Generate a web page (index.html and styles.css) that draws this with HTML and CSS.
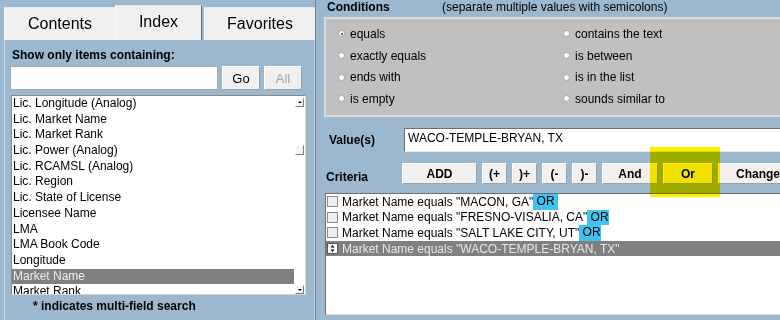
FILE: index.html
```html
<!DOCTYPE html>
<html lang="en">
<head>
  <meta charset="UTF-8">
  <title>Query Builder</title>
  <link rel="stylesheet" href="styles.css">
</head>
<body>
  <div class="window">
    <div class="index-pane">
      <div class="tabs">
        <div class="tab">Contents</div>
        <div class="tab active">Index</div>
        <div class="tab last">Favorites</div>
      </div>

      <div class="index-body">
        <div class="filter-label">Show only items containing:</div>
        <div class="filter-row">
          <input class="filter-input" type="text">
          <button class="btn small">Go</button>
          <button class="btn small disabled">All</button>
        </div>

        <div class="field-list">
          <ul class="items">
            <li>Lic. Longitude (Analog)</li>
            <li>Lic. Market Name</li>
            <li>Lic. Market Rank</li>
            <li>Lic. Power (Analog)</li>
            <li>Lic. RCAMSL (Analog)</li>
            <li>Lic. Region</li>
            <li>Lic. State of License</li>
            <li>Licensee Name</li>
            <li>LMA</li>
            <li>LMA Book Code</li>
            <li>Longitude</li>
            <li class="selected">Market Name</li>
            <li>Market Rank</li>
          </ul>
          <div class="scrollbar">
            <div class="sb-arrow up"></div>
            <div class="sb-track"><div class="sb-thumb"></div></div>
            <div class="sb-arrow down"></div>
          </div>
        </div>

        <div class="footnote">* indicates multi-field search</div>
      </div>
    </div>

    <div class="query-pane">
      <div class="cond-head">
        <span class="cond-title">Conditions</span>
        <span>(separate multiple values with semicolons)</span>
      </div>

      <div class="conditions">
        <label class="option"><span class="radio checked"></span>equals</label>
        <label class="option"><span class="radio"></span>contains the text</label>
        <label class="option"><span class="radio"></span>exactly equals</label>
        <label class="option"><span class="radio"></span>is between</label>
        <label class="option"><span class="radio"></span>ends with</label>
        <label class="option"><span class="radio"></span>is in the list</label>
        <label class="option"><span class="radio"></span>is empty</label>
        <label class="option"><span class="radio"></span>sounds similar to</label>
      </div>

      <div class="value-row">
        <div class="row-label">Value(s)</div>
        <input class="value-input" type="text" value="WACO-TEMPLE-BRYAN, TX">
      </div>

      <div class="criteria-row">
        <div class="row-label crit">Criteria</div>
        <button class="btn op w-add">ADD</button>
        <button class="btn op w-par">(+</button>
        <button class="btn op w-par">)+</button>
        <button class="btn op w-par">(-</button>
        <button class="btn op w-par">)-</button>
        <button class="btn op w-and">And</button>
        <button class="btn op w-or">Or</button>
        <button class="btn op w-chg">Change</button>
        <div class="marker"></div>
      </div>

      <div class="criteria-list">
        <div class="crit-item"><span class="check"></span>Market Name equals "MACON, GA"<span class="or">&nbsp;OR&nbsp;</span></div>
        <div class="crit-item"><span class="check"></span>Market Name equals "FRESNO-VISALIA, CA"<span class="or">&nbsp;OR</span></div>
        <div class="crit-item"><span class="check"></span>Market Name equals "SALT LAKE CITY, UT"<span class="or">&nbsp;OR</span></div>
        <div class="crit-item current">
          <span class="expander">
            <svg width="9" height="9" viewBox="0 0 9 9"><path d="M4.5 1 L6.5 3.5 H2.5 Z M4.5 8 L6.5 5.5 H2.5 Z" fill="#000"/></svg>
          </span>Market Name equals "WACO-TEMPLE-BRYAN, TX"
        </div>
      </div>
    </div>
  </div>
</body>
</html>
```

FILE: styles.css
```css
/* Base */
* {
  margin: 0;
  padding: 0;
  box-sizing: border-box;
}

body {
  background: #9bb8cf;
  color: #000;
  font-family: "Liberation Sans", Arial, sans-serif;
  font-size: 12px;
  width: 780px;
  height: 320px;
  overflow: hidden;
}

.window {
  display: flex;
  height: 320px;
}

/* Left: index pane */
.index-pane {
  flex: none;
  width: 311px;
  margin-left: 4px;
  display: flex;
  flex-direction: column;
}

.tabs {
  display: flex;
  align-items: flex-end;
  height: 40px;
}

.tab {
  width: 111px;
  height: 33px;
  background: #f0f0f0;
  border-top: 1px solid #e4e9ee;
  border-left: 1px solid #fafafa;
  font-size: 16px;
  display: flex;
  align-items: center;
  justify-content: center;
}

.tab.active {
  width: 87px;
  height: 35px;
  border-right: 1px solid #6b6b6b;
  padding-bottom: 2px;
}

.tab.last {
  margin-left: 2px;
}

.index-body {
  flex: 1;
  border-left: 1px solid #c6d7e5;
  border-right: 1px solid #c6d7e5;
  padding: 8px 0 0 5px;
}

.filter-label {
  font-weight: bold;
  line-height: 14px;
  padding-left: 2px;
}

.filter-row {
  display: flex;
  gap: 4px;
  margin-top: 4px;
  height: 24px;
}

.filter-input {
  width: 208px;
  height: 24px;
  background: #fff;
  border: 1px solid #a9a9a9;
  outline: none;
}

.btn {
  background: #f0f0f0;
  border: 1px solid #a0a0a0;
  border-top-color: #fff;
  border-left-color: #fff;
  font-family: inherit;
  color: #000;
}

.btn.small {
  width: 38px;
  height: 24px;
  font-size: 13px;
}

.btn.disabled {
  color: #a3a3a3;
}

.field-list {
  display: flex;
  margin-top: 5px;
  margin-left: 1px;
  width: 295px;
  height: 200px;
  background: #fff;
  border: 1px solid #8a8a8a;
  border-right-color: #d6d6d6;
  border-bottom-color: #d6d6d6;
  overflow: hidden;
}

.items {
  flex: 1;
  list-style: none;
  overflow: hidden;
}

.items li {
  height: 15.7px;
  line-height: 15.7px;
  padding-left: 1px;
  white-space: nowrap;
}

.items li.selected {
  background: #808080;
  color: #ececec;
}

.scrollbar {
  width: 11px;
  display: flex;
  flex-direction: column;
  padding: 2px 1px 0 1px;
}

.sb-arrow,
.sb-thumb {
  height: 9px;
  background: #f4f4f4;
  border: 1px solid #7d7d7d;
  border-top-color: #fff;
  border-left-color: #fff;
  position: relative;
}

.sb-arrow::after {
  content: '';
  position: absolute;
  left: 2px;
  border-left: 2px solid transparent;
  border-right: 2px solid transparent;
}

.sb-arrow.up::after {
  top: 2px;
  border-bottom: 2px solid #000;
}

.sb-arrow.down::after {
  top: 3px;
  border-top: 2px solid #000;
}

.sb-track {
  flex: 1;
}

.sb-thumb {
  margin-top: 38px;
  height: 10px;
}

.footnote {
  margin-top: 4px;
  padding-left: 23px;
  font-weight: bold;
  line-height: 14px;
}

/* Right: query pane */
.query-pane {
  flex: 1;
  min-width: 0;
  border-left: 1px solid #6c8396;
  padding-left: 8px;
  overflow: hidden;
}

.cond-head {
  display: flex;
  height: 17px;
  line-height: 15px;
  white-space: nowrap;
}

.cond-title {
  width: 118px;
  padding-left: 3px;
  font-weight: bold;
  flex: none;
}

.conditions {
  width: 520px;
  height: 100px;
  background: #c0c0c0;
  border: 2px solid #dcdcdc;
  display: grid;
  grid-template-columns: 225px 1fr;
  grid-auto-rows: 21.7px;
  padding: 4px 0 0 12px;
}

.option {
  display: flex;
  align-items: center;
  gap: 5px;
  white-space: nowrap;
}

.radio {
  width: 7px;
  height: 7px;
  border-radius: 50%;
  background: #fff;
  border: 1px solid #a4a4a4;
  position: relative;
}

.radio.checked::after {
  content: '';
  position: absolute;
  left: 1.5px;
  top: 1.5px;
  width: 2px;
  height: 2px;
  border-radius: 50%;
  background: #222;
}

.value-row {
  display: flex;
  align-items: center;
  margin-top: 11px;
  height: 24px;
}

.row-label {
  flex: none;
  width: 80px;
  padding-left: 5px;
  font-weight: bold;
}

.value-input {
  flex: none;
  width: 420px;
  height: 24px;
  background: #fff;
  border: 1px solid #e6e6e6;
  border-top-color: #6e6e6e;
  border-left-color: #6e6e6e;
  padding: 0 3px 4px;
  font-family: inherit;
  font-size: 12px;
  outline: none;
}

.criteria-row {
  position: relative;
  display: flex;
  gap: 5px;
  margin-top: 11px;
  height: 21px;
}

.row-label.crit {
  width: 73px;
  padding-left: 2px;
  margin-top: 7px;
  line-height: 14px;
}

.btn.op {
  flex: none;
  height: 21px;
  font-size: 12px;
  font-weight: bold;
}

.w-add { width: 75px; }
.w-par { width: 25px; }
.w-and { width: 56px; }
.w-or { width: 50px; }
.w-chg { width: 80px; }

/* highlighter stroke drawn over the Or button */
.marker {
  position: absolute;
  left: 326px;
  top: -16px;
  width: 70px;
  height: 50px;
  background: #fff000;
  mix-blend-mode: multiply;
  pointer-events: none;
}

.criteria-list {
  margin-top: 9px;
  margin-left: 1px;
  width: 520px;
  height: 122px;
  background: #fff;
  border-top: 1px solid #6e6e6e;
  border-left: 1px solid #6e6e6e;
  border-bottom: 1px solid #d4d4d4;
}

.crit-item {
  display: flex;
  align-items: center;
  height: 15.6px;
  padding-left: 1px;
  white-space: nowrap;
}

.check {
  flex: none;
  width: 11px;
  height: 11px;
  margin-right: 4px;
  background: #efefef;
  border: 1px solid #8a8a8a;
}

.or {
  background: #3fc3f1;
  line-height: 15.6px;
}

.crit-item.current {
  background: #808080;
  color: #e6e6e6;
}

.expander {
  flex: none;
  width: 11px;
  height: 11px;
  margin-right: 4px;
  background: #fff;
  border: 1px solid #555;
  display: flex;
  align-items: center;
  justify-content: center;
}
```
